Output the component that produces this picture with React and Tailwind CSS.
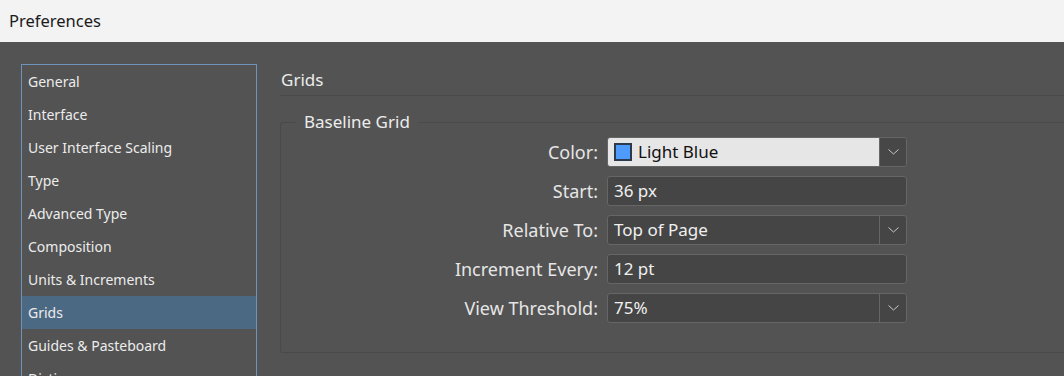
import React from "react";

const items = [
  "General",
  "Interface",
  "User Interface Scaling",
  "Type",
  "Advanced Type",
  "Composition",
  "Units & Increments",
  "Grids",
  "Guides & Pasteboard",
  "Dictionary",
];

function Chevron() {
  return (
    <svg width="11" height="6" viewBox="0 0 11 6" fill="none">
      <path d="M0.5 0.5 L5.5 5 L10.5 0.5" stroke="#c8c8c8" strokeWidth="1" />
    </svg>
  );
}

function Row({ label, children }) {
  return (
    <div className="flex items-center h-[30px]">
      <div className="w-[326px] text-right pr-[9px] text-[18px] text-[#e6e6e6]">{label}</div>
      {children}
    </div>
  );
}

function Field({ value, dropdown }) {
  return (
    <div className="flex w-[300px] h-[30px] rounded-[3px] border border-[#666666] bg-[#454545] overflow-hidden">
      <div className="flex-1 flex items-center pl-[6px] text-[17px] text-[#f0f0f0]">{value}</div>
      {dropdown && (
        <div className="w-[27px] flex items-center justify-center border-l border-[#666666]">
          <Chevron />
        </div>
      )}
    </div>
  );
}

export default function App() {
  return (
    <div
      className="w-[1064px] h-[376px] overflow-hidden bg-[#535353] text-[14px]"
      style={{ fontFamily: '"Noto Sans", "Open Sans", sans-serif' }}
    >
      {/* title bar */}
      <div className="h-[42px] bg-[#f3f3f3] flex items-center pl-[9px] text-[16.5px] text-[#1a1a1a]">
        Preferences
      </div>

      <div className="flex pt-[22px]">
        {/* category list */}
        <div className="ml-[21px] w-[236px] h-[340px] border border-[#6f94bb] border-b-0">
          {items.map((it) => (
            <div
              key={it}
              className={`h-[33px] flex items-center pl-[6px] text-[#ececec] ${
                it === "Grids" ? "bg-[#4c6983]" : ""
              }`}
            >
              {it}
            </div>
          ))}
        </div>

        {/* panel */}
        <div className="flex-1 ml-[23px]">
          <div className="h-[32px] flex items-center pl-[1px] text-[17px] text-[#ececec] border-b border-[#4a4a4a]">
            Grids
          </div>

          <div className="relative mt-[26px] h-[231px] border border-[#4a4a4a] border-r-0 rounded-l-[3px]">
            <div className="absolute -top-[12px] left-[15px] px-[8px] bg-[#535353] text-[17px] text-[#ececec] leading-[22px]">
              Baseline Grid
            </div>

            <div className="flex flex-col gap-[9px] pt-[14px]">
              <Row label="Color:">
                <div className="flex w-[300px] h-[30px] rounded-[3px] border border-[#666666] overflow-hidden">
                  <div className="flex-1 flex items-center gap-[6px] pl-[6px] bg-[#e6e6e6] text-[17px] text-[#111111]">
                    <span className="w-[18px] h-[18px] bg-[#4d9bff] border-2 border-[#2c3a4c] box-border" />
                    Light Blue
                  </div>
                  <div className="w-[27px] flex items-center justify-center border-l border-[#666666] bg-[#474747]">
                    <Chevron />
                  </div>
                </div>
              </Row>
              <Row label="Start:">
                <Field value="36 px" />
              </Row>
              <Row label="Relative To:">
                <Field value="Top of Page" dropdown />
              </Row>
              <Row label="Increment Every:">
                <Field value="12 pt" />
              </Row>
              <Row label="View Threshold:">
                <Field value="75%" dropdown />
              </Row>
            </div>
          </div>
        </div>
      </div>
    </div>
  );
}
